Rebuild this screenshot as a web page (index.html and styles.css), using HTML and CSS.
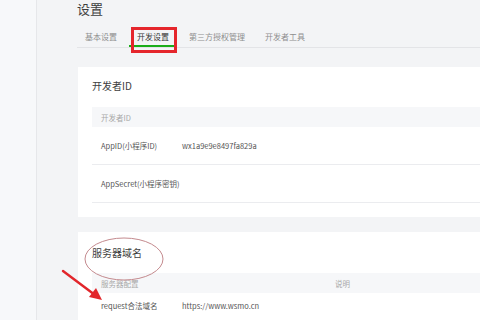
FILE: index.html
```html
<!DOCTYPE html>
<html lang="zh-CN">
<head>
<meta charset="utf-8">
<title>设置</title>
<link rel="stylesheet" href="styles.css">
</head>
<body>
<div class="app">
  <aside class="sidebar"></aside>
  <main class="main">
    <h1 class="title">设置</h1>
    <nav class="tabs">
      <span class="tab">基本设置</span>
      <span class="tab active">开发设置<span class="mark-rect"></span></span>
      <span class="tab">第三方授权管理</span>
      <span class="tab">开发者工具</span>
    </nav>
    <section class="card first">
      <h2 class="card-title">开发者ID</h2>
      <div class="table">
        <div class="thead"><span class="col1">开发者ID</span></div>
        <div class="row tall"><span class="col1">AppID(小程序ID)</span><span class="col2">wx1a9e9e8497fa829a</span></div>
        <div class="row tall"><span class="col1">AppSecret(小程序密钥)</span><span class="col2"></span></div>
      </div>
    </section>
    <section class="card second">
      <h2 class="card-title">服务器域名</h2>
      <div class="table">
        <div class="thead"><span class="col1">服务器配置</span><span class="col2"></span><span class="col3">说明</span></div>
        <div class="row short"><span class="col1">request合法域名</span><span class="col2">https://www.wsmo.cn</span></div>
      </div>
    </section>
  </main>
  <svg class="annot" width="480" height="320" viewBox="0 0 480 320">
    <ellipse cx="124" cy="259" rx="39" ry="21" fill="none" stroke="#c48a8e" stroke-width="1"/>
    <line x1="63" y1="271" x2="95" y2="295" stroke="#e2262b" stroke-width="2.4" stroke-linecap="round"/>
    <polygon points="102,300 89,297 96,288" fill="#e2262b"/>
  </svg>
</div>
</body>
</html>
```
FILE: styles.css
```css
html, body {
  margin: 0;
  padding: 0;
  width: 480px;
  height: 320px;
  overflow: hidden;
  background: #f3f4f6;
  font-family: "Noto Sans CJK SC", "Liberation Sans", sans-serif;
  color: #353535;
}
.app {
  position: relative;
  display: flex;
  width: 480px;
  height: 320px;
}
.sidebar {
  width: 36px;
  flex: none;
  background: #f7f8fa;
  border-right: 1px solid #e6e7ea;
}
.main {
  flex: 1;
  padding-left: 40px;
  min-width: 0;
}
.title {
  margin: 0;
  font-size: 13px;
  line-height: 18px;
  font-weight: normal;
  color: #3e3e3e;
}
.tabs {
  display: flex;
  gap: 4px;
  margin-top: 9px;
  border-bottom: 1px solid #e3e4e7;
  height: 20px;
}
.tab {
  position: relative;
  padding: 0 8px;
  font-size: 8px;
  line-height: 20px;
  color: #8e8e8e;
  white-space: nowrap;
}
.tab.active {
  color: #353535;
  box-shadow: inset 0 -2px 0 #1aad19;
}
.mark-rect {
  position: absolute;
  left: 2px;
  top: 0;
  width: 40px;
  height: 20px;
  border: 3px solid #e5262c;
}
.card {
  background: #fff;
  padding: 11px 0 14px 14px;
  margin-left: 1px;
}
.card.first {
  margin-top: 19px;
}
.card.second {
  margin-top: 15px;
  padding-top: 13px;
}
.card-title {
  margin: 0 0 13px;
  font-size: 10px;
  line-height: 16px;
  font-weight: normal;
  color: #3e3e3e;
}
.second .card-title {
  margin-bottom: 12px;
}
.thead {
  display: flex;
  height: 20px;
  align-items: center;
  background: #f6f7f9;
  font-size: 7.5px;
  color: #a8a8a8;
}
.row {
  display: flex;
  align-items: center;
  border-bottom: 1px solid #ebecef;
  font-size: 7.5px;
  color: #555;
}
.row.tall {
  height: 37px;
}
.row.short {
  height: 24px;
  border-bottom: none;
}
.col1 {
  width: 81px;
  padding-left: 9px;
  flex: none;
  white-space: nowrap;
}
.col2 {
  width: 153px;
  flex: none;
  white-space: nowrap;
}
.col3 {
  flex: none;
}
.annot {
  position: absolute;
  left: 0;
  top: 0;
  pointer-events: none;
}
```
